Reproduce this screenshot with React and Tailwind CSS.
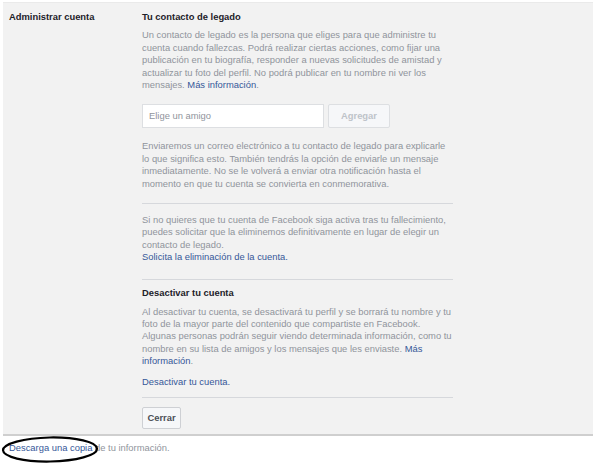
import React from 'react';

const para = 'text-[9.4px] leading-[12.4px] text-[#90949c]';
const link = 'text-[#365899]';
const heading = 'text-[9.4px] leading-[12.4px] font-bold text-[#1d2129]';
const rule = 'h-px bg-[#d6d8dc]';

export default function App() {
    return (
        <div className="relative w-[600px] h-[475px] bg-white font-['Liberation_Sans',Arial,sans-serif]">
            <div className="ml-[3px] pt-[2px] w-[590px]">
                <div className="flex bg-[#f2f2f2] border-t border-[#eaeaea] border-b-2 border-b-[#cfcfcf] pt-[8px] pb-[5px]">
                    <div className={`${heading} w-[139px] pl-[6px]`}>Administrar cuenta</div>

                    <div className="w-[311px] flex flex-col">
                        <div className={heading}>Tu contacto de legado</div>
                        <p className={`${para} mt-[6px]`}>
                            Un contacto de legado es la persona que eliges para que administre tu<br />
                            cuenta cuando fallezcas. Podrá realizar ciertas acciones, como fijar una<br />
                            publicación en tu biografía, responder a nuevas solicitudes de amistad y<br />
                            actualizar tu foto del perfil. No podrá publicar en tu nombre ni ver los<br />
                            mensajes. <span className={link}>Más información</span>.
                        </p>

                        <div className="flex gap-[4px] mt-[13px]">
                            <div className="w-[182px] h-[24px] bg-white border border-[#dddfe2] flex items-center px-[6px] text-[9.4px] text-[#90949c]">
                                Elige un amigo
                            </div>
                            <button
                                type="button"
                                className="w-[62px] h-[24px] bg-[#f6f7f9] border border-[#dddfe2] rounded-[2px] text-[9.4px] font-bold text-[#bec3c9]"
                            >
                                Agregar
                            </button>
                        </div>

                        <p className={`${para} mt-[12px]`}>
                            Enviaremos un correo electrónico a tu contacto de legado para explicarle<br />
                            lo que significa esto. También tendrás la opción de enviarle un mensaje<br />
                            inmediatamente. No se le volverá a enviar otra notificación hasta el<br />
                            momento en que tu cuenta se convierta en conmemorativa.
                        </p>

                        <div className={`${rule} mt-[13px]`} />

                        <p className={`${para} mt-[10px]`}>
                            Si no quieres que tu cuenta de Facebook siga activa tras tu fallecimiento,<br />
                            puedes solicitar que la eliminemos definitivamente en lugar de elegir un<br />
                            contacto de legado.<br />
                            <span className={link}>Solicita la eliminación de la cuenta.</span>
                        </p>

                        <div className={`${rule} mt-[15px]`} />

                        <div className={`${heading} mt-[7px]`}>Desactivar tu cuenta</div>
                        <p className={`${para} mt-[6.5px]`}>
                            Al desactivar tu cuenta, se desactivará tu perfil y se borrará tu nombre y tu<br />
                            foto de la mayor parte del contenido que compartiste en Facebook.<br />
                            Algunas personas podrán seguir viendo determinada información, como tu<br />
                            nombre en su lista de amigos y los mensajes que les enviaste. <span className={link}>Más</span><br />
                            <span className={link}>información</span>.
                        </p>

                        <p className={`${para} ${link} mt-[8px]`}>Desactivar tu cuenta.</p>

                        <div className={`${rule} mt-[9px]`} />

                        <div className="mt-[6px]">
                            <button
                                type="button"
                                className="w-[39px] h-[22px] bg-[#f6f7f9] border border-[#ced0d4] rounded-[2px] text-[9.4px] font-bold text-[#4b4f56]"
                            >
                                Cerrar
                            </button>
                        </div>
                    </div>
                </div>

                <p className={`${para} pl-[6px] mt-[6px]`}>
                    <span className={link}>Descarga una copia</span> de tu información.
                </p>
            </div>

            {/* hand-drawn annotation round the link */}
            <svg className="absolute left-0 top-[435px]" width="104" height="30" viewBox="0 0 104 30">
                <ellipse cx="50" cy="14.5" rx="47" ry="12" fill="none" stroke="#000" strokeWidth="2.2" transform="rotate(-1 50 14.5)" />
            </svg>
        </div>
    );
}
